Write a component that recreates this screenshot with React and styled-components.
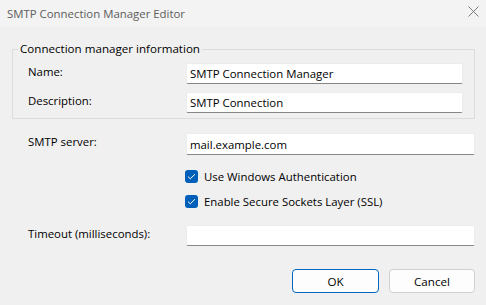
import React from 'react';
import styled, { createGlobalStyle } from 'styled-components';

const GlobalStyle = createGlobalStyle`
  html, body {
    margin: 0;
    padding: 0;
    background: #f0f0f0;
  }
  body {
    font-family: "Open Sans", "Noto Sans", "Liberation Sans", sans-serif;
    font-size: 11.4px;
    color: #000;
  }
`;

const Window = styled.div`
  width: 486px;
  height: 305px;
  display: flex;
  flex-direction: column;
  background: #f0f0f0;
  overflow: hidden;
`;

const TitleBar = styled.div`
  height: 27px;
  flex: none;
  display: flex;
  align-items: center;
  justify-content: space-between;
  padding: 0 6px 0 7px;
  background: #f3f3f3;
  color: #5c5c5c;
  font-size: 11.4px;
`;

const CloseButton = styled.div`
  width: 14px;
  height: 14px;
  display: flex;
  align-items: center;
  justify-content: center;
  margin-top: -5px;
`;

const Body = styled.div`
  flex: 1;
  display: flex;
  flex-direction: column;
  padding: 14px 11px 0 12px;
`;

const Group = styled.fieldset`
  margin: 0;
  padding: 6px 11px 5px 15px;
  border: 1px solid #dcdcdc;
  display: flex;
  flex-direction: column;
  gap: 8px;
  min-width: 0;
`;

const Legend = styled.legend`
  margin-left: -10px;
  padding: 0 2px;
  line-height: 16px;
  font-size: 11.6px;
`;

const Row = styled.div`
  display: grid;
  grid-template-columns: 158px 1fr;
  align-items: start;
  padding-left: ${(p) => p.$indent || 0}px;
  margin-top: ${(p) => p.$top || 0}px;
`;

const Label = styled.label`
  line-height: 16px;
  padding-top: 1px;
`;

const TextBox = styled.div`
  height: ${(p) => p.$h || 21}px;
  box-sizing: border-box;
  background: #fff;
  border: 1px solid #ececec;
  border-bottom-color: #878787;
  border-radius: 2px;
  padding: 0 3px;
  display: flex;
  align-items: center;
  white-space: nowrap;
  overflow: hidden;
`;

const CheckRow = styled.div`
  display: flex;
  align-items: center;
  gap: 6px;
  height: 16px;
  margin-left: 173px;
  margin-top: ${(p) => p.$top}px;
`;

const Box = styled.span`
  width: 13px;
  height: 13px;
  border-radius: 3px;
  background: #005fb8;
  display: flex;
  align-items: center;
  justify-content: center;
  flex: none;
`;

const Buttons = styled.div`
  display: flex;
  justify-content: flex-end;
  gap: 10px;
  margin-top: 23px;
`;

const Button = styled.button`
  width: ${(p) => p.$w}px;
  height: 24px;
  box-sizing: border-box;
  background: #fdfdfd;
  border: 1px solid ${(p) => (p.$primary ? '#0067c0' : '#d0d0d0')};
  border-radius: 4px;
  font-family: inherit;
  font-size: 11.6px;
  color: #000;
  padding: 0;
`;

const CheckBox = ({ children, top }) => (
  <CheckRow $top={top}>
    <Box>
      <svg width="9" height="7" viewBox="0 0 9 7">
        <path d="M1 3.6 L3.3 5.8 L8 1.2" fill="none" stroke="#fff" strokeWidth="1" />
      </svg>
    </Box>
    <span>{children}</span>
  </CheckRow>
);

const App = () => (
  <>
    <GlobalStyle />
    <Window>
      <TitleBar>
        <span>SMTP Connection Manager Editor</span>
        <CloseButton>
          <svg width="11" height="11" viewBox="0 0 11 11">
            <path d="M0.5 0.5 L10.5 10.5 M10.5 0.5 L0.5 10.5" stroke="#7a7a7a" strokeWidth="1" />
          </svg>
        </CloseButton>
      </TitleBar>
      <Body>
        <Group>
          <Legend>Connection manager information</Legend>
          <Row>
            <Label>Name:</Label>
            <TextBox>SMTP Connection Manager</TextBox>
          </Row>
          <Row>
            <Label>Description:</Label>
            <TextBox>SMTP Connection</TextBox>
          </Row>
        </Group>
        <Row $indent={16} $top={14}>
          <Label>SMTP server:</Label>
          <TextBox $h={22}>mail.example.com</TextBox>
        </Row>
        <CheckBox top={13}>Use Windows Authentication</CheckBox>
        <CheckBox top={9}>Enable Secure Sockets Layer (SSL)</CheckBox>
        <Row $indent={16} $top={16}>
          <Label>Timeout (milliseconds):</Label>
          <TextBox />
        </Row>
        <Buttons>
          <Button $primary $w={87}>OK</Button>
          <Button $w={86}>Cancel</Button>
        </Buttons>
      </Body>
    </Window>
  </>
);

export default App;
